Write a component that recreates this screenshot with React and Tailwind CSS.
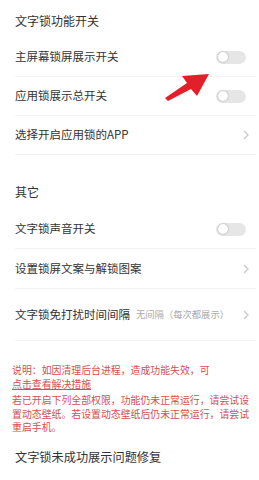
import React from "react";

const font = { fontFamily: '"Noto Sans CJK SC", "Noto Sans", sans-serif' };

function Toggle() {
  return (
    <div className="relative mr-[-3px] h-[13px] w-[30px] rounded-full bg-[#e6e6e6]">
      <div className="absolute left-[2px] top-[1.5px] h-[10px] w-[10px] rounded-full bg-white shadow-[0_0_2px_rgba(0,0,0,0.35)]" />
    </div>
  );
}

function Chevron() {
  return (
    <svg width="6" height="10" viewBox="0 0 6 10" className="mr-[-6px] shrink-0">
      <path d="M1 1 L5 5 L1 9" fill="none" stroke="#c8c8c8" strokeWidth="1.2" />
    </svg>
  );
}

function Row({ label, right, h = "h-[39px]", divider = true }) {
  return (
    <div className={`flex ${h} items-center justify-between pr-[13px] ${divider ? "border-b border-[#f2f2f2]" : ""}`}>
      <span className="text-[11.5px] text-[#333]">{label}</span>
      {right}
    </div>
  );
}

export default function App() {
  return (
    <div className="relative h-[480px] w-[259px] overflow-hidden bg-white" style={font}>
      <div className="flex h-[38px] items-end pl-[15px] pb-[8px]">
        <span className="text-[12px] text-[#333]">文字锁功能开关</span>
      </div>
      <div className="ml-[15px] mr-[3px]">
        <Row label="主屏幕锁屏展示开关" right={<Toggle />} />
        <Row label="应用锁展示总开关" right={<Toggle />} />
        <Row label="选择开启应用锁的APP" right={<Chevron />} />
      </div>
      <div className="flex h-[55px] items-end pl-[15px] pb-[9px]">
        <span className="text-[12px] text-[#333]">其它</span>
      </div>
      <div className="ml-[15px] mr-[3px]">
        <Row label="文字锁声音开关" right={<Toggle />} />
        <Row label="设置锁屏文案与解锁图案" right={<Chevron />} h="h-[40px]" />
        <Row
          label="文字锁免打扰时间间隔"
          h="h-[52px]"
          right={
            <div className="flex items-center gap-[14px]">
              <span className="text-[9.3px] text-[#aaa]">无间隔（每次都展示）</span>
              <Chevron />
            </div>
          }
        />
      </div>
      <div className="pl-[12px] pr-[4px] pt-[22px] text-[9.9px] leading-[14px] text-[#d24f52]">
        <div>说明：如因清理后台进程，造成功能失效，可</div>
        <div className="mb-[3px] underline decoration-[#d24f52]">点击查看解决措施</div>
        <div className="leading-[13.5px]">
          <div className="whitespace-nowrap">若已开启下列全部权限，功能仍未正常运行，请尝试设</div>
          <div className="whitespace-nowrap">置动态壁纸。若设置动态壁纸后仍未正常运行，请尝试</div>
          <div>重启手机。</div>
        </div>
      </div>
      <div className="pl-[15px] pt-[8px]">
        <span className="text-[12.2px] text-[#333]">文字锁未成功展示问题修复</span>
      </div>
      <svg className="absolute left-[160px] top-[68px]" width="55" height="40" viewBox="0 0 55 40">
        <polygon points="49,6 22,8 27,15 5,30 8,33 31,21 37,28" fill="#e3202a" />
      </svg>
    </div>
  );
}
